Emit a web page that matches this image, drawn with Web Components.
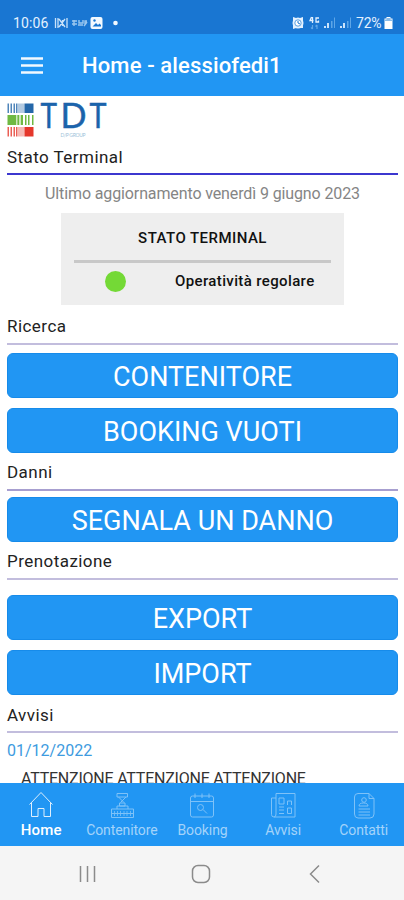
<!DOCTYPE html>
<html lang="it">
<head>
<meta charset="utf-8">
<title>Home</title>
<style>
    html, body {
        margin: 0;
        height: 100%;
        overflow: hidden;
        font-family: Roboto, sans-serif;
        background: #fff;
    }
</style>
</head>
<body>
<terminal-app></terminal-app>

<script>
const icons = {
    home: `<path d="M1.500 13.500 13 1.500 24.500 13.500M3.500 11.500V25.500H10V17.500H16V25.500H22.500V11.500"/>`,
    container: `<path d="M8 2.500H18.500V6H8ZM9.500 6 15 11.500M17 6 11.500 11.500M10.500 12H16V15H10.500ZM8 15H19V18M8 15V18M2.500 18H24.500V26.500H2.500ZM2.500 22.500H24.500"/><path d="M5.500 20V25M8.500 20V25M11.500 20V25M15 20V25M18 20V25M21.500 20V25" opacity=".8"/>`,
    booking: `<path d="M3.500 5H22.500Q24.500 5 24.500 7V24Q24.500 26 22.500 26H3.500Q1.500 26 1.500 24V7Q1.500 5 3.500 5ZM1.500 10.500H24.500M6 2.500V7M13 2.500V7M20 2.500V7M14 18.500 18 22.500"/><circle cx="11.500" cy="16.500" r="3"/>`,
    news: `<path d="M6 2.500H25V26H4Q1.500 26 1.500 23.500V7H6M6 2.500V23Q6 26 4 26M9 7H14V13H9ZM17.500 10V14M21.500 10V14M17.500 10H21.500M9 16H14M9 19H14M9 22.500H14M17.500 17H21.500V22.500H17.500Z"/>`,
    contacts: `<path d="M7 2.500H18L23 7.500V23Q23 27 19 27H7Q3.500 27 3.500 23V6Q3.500 2.500 7 2.500ZM18 2.500V7.500H23M8 15Q8 12 12.500 12T17 15ZM7.500 18H19M7.500 21H19M7.500 24H19"/><circle cx="13" cy="9" r="2.300"/>`
};

class StatusBar extends HTMLElement {
    constructor() {
        super();

        this.shadow = this.attachShadow({ mode: "open" });
        this.shadow.innerHTML = `
            <style>
                :host {
                    display: flex;
                    align-items: center;
                    box-sizing: border-box;
                    height: 34px;
                    padding: 12px 11px 0 13px;
                    background: #1976d2;
                    color: #e3f1ff;
                    font-size: 14px;
                    line-height: 20px;
                }

                svg {
                    display: block;
                    flex: none;
                }

                .clock {
                    width: 41px;
                    letter-spacing: 0.15px;
                }

                .battery {
                    width: 28px;
                    letter-spacing: -0.2px;
                }
            </style>
            <span class="clock">10:06</span>
            <svg width="68" height="16" viewBox="0 0 68 16" fill="none" stroke="#c8e2fa">
                <path d="M1.500 3V13M4 3V13M13 3V13M5 4 11 12M11 4 5 12M8.500 5V11" stroke-width="1.300"/>
                <path d="M18 6H23M18 9H23M20 5V11M25 5V8H29V5M24 10H29M31 10V6H33M30 11 33 7" stroke="#9bc7ef" stroke-width="1.400"/>
                <rect x="36.500" y="2" width="12" height="12" rx="2" fill="#f2f9ff" stroke="none"/>
                <path d="M38.500 11.500 42 8 44 10 45.500 8.500 47 10V11.500Z" fill="#1976d2" stroke="none"/>
                <circle cx="40.500" cy="5.500" r="1.200" fill="#1976d2" stroke="none"/>
                <circle cx="61.500" cy="8" r="2.300" fill="#f2f9ff" stroke="none"/>
            </svg>
            <svg width="64" height="16" viewBox="0 0 64 16" style="margin-left:auto">
                <path d="M1 2 4 3H8L11 2V13L8 13H4L1 14Z" fill="#e3f1ff"/>
                <circle cx="6" cy="8" r="5.500" fill="#e3f1ff"/>
                <circle cx="6" cy="8" r="3.200" fill="#fff" stroke="#5ba0e1"/>
                <path d="M6 6V8L8 9" fill="none" stroke="#1976d2"/>
                <path d="M19.500 2 18 5.500H21.500M20.500 2V8M27 3H24V7H26.500V5.500" fill="none" stroke="#e3f1ff" stroke-width="1.300"/>
                <path d="M20.500 10V14M19 12.500 20.500 14M25 14V10M23.500 11.500 25 10" fill="none" stroke="#5ea6e7" stroke-width="1.200"/>
                <path d="M32 13V11H34V13ZM35 13V8H37V13Z" fill="#cae3fb"/>
                <path d="M39 13V6H40.500V13ZM42 13V2.500H43V13Z" fill="#5ea6e7"/>
                <path d="M48 13V11H50V13ZM51 13V8H53V13Z" fill="#cae3fb"/>
                <path d="M55 13V6H56.500V13ZM58 13V2.500H59V13Z" fill="#5ea6e7"/>
            </svg>
            <span class="battery">72%</span>
            <svg width="9" height="16" viewBox="0 0 9 16">
                <path d="M2.500 2H6.500V3.500H8.500V14H0.500V3.500H2.500Z" fill="#fff"/>
                <path d="M2.500 3H6.500V4.500H8.500V6H0.500V4.500H2.500Z" fill="#8bbce9"/>
            </svg>
        `;
    }
}

class AppHeader extends HTMLElement {
    constructor() {
        super();

        this.shadow = this.attachShadow({ mode: "open" });
        this.shadow.innerHTML = `
            <style>
                :host {
                    display: flex;
                    align-items: center;
                    box-sizing: border-box;
                    height: 62px;
                    padding: 1px 21px 0;
                    gap: 39px;
                    background: #2196f3;
                    color: #fff;
                    font-size: 22px;
                    font-weight: 500;
                    letter-spacing: 0.13px;
                }

                svg {
                    display: block;
                }
            </style>
            <svg width="22" height="18" viewBox="0 0 22 18" stroke="#f2f9ff" stroke-width="2.300">
                <path d="M0 1.500H22M0 8.500H22M0 15.500H22"/>
            </svg>
            <slot></slot>
        `;
    }
}

class BrandLogo extends HTMLElement {
    constructor() {
        super();

        this.shadow = this.attachShadow({ mode: "open" });
        this.shadow.innerHTML = `
            <style>
                :host {
                    display: block;
                    height: 51px;
                }

                svg {
                    display: block;
                }

                text {
                    font-family: Lato, sans-serif;
                }
            </style>
            <svg width="110" height="51" viewBox="0 0 110 51">
                <g fill="#2467a9">
                    <path d="M0.500 7.500H2V17H0.500ZM3.500 7.500H5V17H3.500ZM6.500 7.500H8V17H6.500ZM9 7.500H10.500V17H9Z" opacity=".8"/>
                    <path d="M11 7.500H17.500V17H11Z" opacity=".35"/>
                    <path d="M17.500 7.500H26.500V17H17.500Z"/>
                </g>
                <path d="M0.500 19H9V29H0.500ZM10.500 19H12V29H10.500ZM14 19H16V29H14ZM18 19H19.500V29H18ZM21 19H22.500V29H21ZM25 19H26.500V29H25Z" fill="#6fb943"/>
                <path d="M8 19H16V29H8Z" fill="#6fb943" opacity=".35"/>
                <g fill="#e5372b">
                    <path d="M0.500 31H2V40.500H0.500ZM3.500 31H5V40.500H3.500ZM6.500 31H8V40.500H6.500ZM9 31H10.500V40.500H9Z" opacity=".8"/>
                    <path d="M11 31H17.500V40.500H11Z" opacity=".35"/>
                    <path d="M17.500 31H26.500V40.500H17.500Z"/>
                </g>
                <g fill="#1b63ab" stroke="#1b63ab" stroke-width=".5" font-size="34.500">
                    <text x="33.500" y="32.300" textLength="16.500" lengthAdjust="spacingAndGlyphs">T</text>
                    <text x="53.500" y="32.300" textLength="26" lengthAdjust="spacingAndGlyphs">D</text>
                    <text x="82.500" y="32.300" textLength="17" lengthAdjust="spacingAndGlyphs">T</text>
                </g>
                <text x="53.500" y="41" font-size="5" fill="#9dbfd9" textLength="25">D/P GROUP</text>
            </svg>
        `;
    }
}

class PageSection extends HTMLElement {
    constructor() {
        super();

        this.shadow = this.attachShadow({ mode: "open" });
        this.shadow.innerHTML = `
            <style>
                :host {
                    display: block;
                    margin-bottom: 10px;
                }

                h2 {
                    margin: 0;
                    padding-bottom: var(--title-drop, 8px);
                    border-bottom: 2px solid var(--rule-color, #c2bddd);
                    color: #222;
                    font-size: 17px;
                    font-weight: 400;
                    line-height: calc(26px - var(--title-drop, 8px));
                    letter-spacing: 0.45px;
                }

                .body {
                    display: flex;
                    flex-direction: column;
                    gap: 10px;
                    padding-top: var(--body-gap, 8px);
                }
            </style>
            <h2></h2>
            <div class="body"><slot></slot></div>
        `;
    }

    connectedCallback() {
        this.shadow.querySelector("h2").textContent = this.getAttribute("heading");
    }
}

class ActionButton extends HTMLElement {
    constructor() {
        super();

        this.shadow = this.attachShadow({ mode: "open" });
        this.shadow.innerHTML = `
            <style>
                :host {
                    display: block;
                }

                button {
                    display: block;
                    width: 100%;
                    height: 45px;
                    padding: 3px 0 0;
                    border: 1px solid #168bea;
                    border-radius: 6px;
                    background: #2196f3;
                    color: #fff;
                    font: 400 27px/40px Roboto, sans-serif;
                    cursor: pointer;
                }
            </style>
            <button><slot></slot></button>
        `;
    }
}

class StatusCard extends HTMLElement {
    constructor() {
        super();

        this.shadow = this.attachShadow({ mode: "open" });
        this.shadow.innerHTML = `
            <style>
                :host {
                    display: block;
                    box-sizing: border-box;
                    width: 283px;
                    height: 92px;
                    margin: -1px 0 0 54px;
                    padding: 15px 13px 0;
                    background: #eee;
                    color: #111;
                    font-size: 15px;
                    font-weight: 500;
                    line-height: 20px;
                }

                .title {
                    padding-bottom: 12px;
                    border-bottom: 3px solid #c8c8c8;
                    text-align: center;
                    letter-spacing: 0.45px;
                }

                .row {
                    display: flex;
                    align-items: center;
                    height: 36px;
                    gap: 49px;
                    padding-left: 31px;
                    letter-spacing: 0.37px;
                    white-space: nowrap;
                }

                .dot {
                    width: 21px;
                    height: 21px;
                    border-radius: 50%;
                    background: #74d936;
                }
            </style>
            <div class="title"><slot name="title"></slot></div>
            <div class="row"><span class="dot"></span><slot></slot></div>
        `;
    }
}

class TabItem extends HTMLElement {
    constructor() {
        super();

        this.shadow = this.attachShadow({ mode: "open" });
        this.shadow.innerHTML = `
            <style>
                :host {
                    display: flex;
                    flex-direction: column;
                    align-items: center;
                    padding-top: 8px;
                    color: #a3d3fa;
                    font-size: 14px;
                    line-height: 18px;
                    letter-spacing: -0.1px;
                }

                :host([active]) {
                    color: #fff;
                    font-size: 15px;
                    font-weight: 500;
                    letter-spacing: 0.2px;
                }

                svg {
                    display: block;
                    margin-bottom: 2px;
                    opacity: 0.72;
                }

                :host([active]) svg {
                    opacity: 0.85;
                }
            </style>
            <svg width="26" height="28" viewBox="0 0 26 28" fill="none" stroke="currentColor"></svg>
            <slot></slot>
        `;
    }

    connectedCallback() {
        this.shadow.querySelector("svg").innerHTML = icons[this.getAttribute("icon")];
    }
}

class TabBar extends HTMLElement {
    constructor() {
        super();

        this.shadow = this.attachShadow({ mode: "open" });
        this.shadow.innerHTML = `
            <style>
                :host {
                    display: grid;
                    grid-template-columns: repeat(5, 1fr);
                    height: 63px;
                    padding-left: 1px;
                    background: #2196f3;
                }
            </style>
            <slot></slot>
        `;
    }
}

class SystemNav extends HTMLElement {
    constructor() {
        super();

        this.shadow = this.attachShadow({ mode: "open" });
        this.shadow.innerHTML = `
            <style>
                :host {
                    display: grid;
                    grid-template-columns: 113px 117px 14px;
                    align-items: center;
                    box-sizing: border-box;
                    height: 54px;
                    padding: 2px 0 0 78px;
                    background: #f5f5f5;
                }
            </style>
            <svg width="20" height="20" viewBox="0 0 20 20" fill="none" stroke="#8b8b8b" stroke-width="1.500">
                <path d="M2.500 2V18M9.500 2V18M16.500 2V18"/>
            </svg>
            <svg width="20" height="20" viewBox="0 0 20 20" fill="none" stroke="#8b8b8b" stroke-width="1.500">
                <rect x="1.500" y="1.500" width="17" height="17" rx="5.500"/>
            </svg>
            <svg width="14" height="20" viewBox="0 0 14 20" fill="none" stroke="#8b8b8b" stroke-width="1.500">
                <path d="M11 1.500 2.500 10 11 18.500"/>
            </svg>
        `;
    }
}

class TerminalApp extends HTMLElement {
    constructor() {
        super();

        this.shadow = this.attachShadow({ mode: "open" });
        this.shadow.innerHTML = `
            <style>
                :host {
                    display: flex;
                    flex-direction: column;
                    height: 900px;
                }

                main {
                    flex: 1;
                    min-height: 0;
                    overflow: hidden;
                    padding: 0 6px 0 7px;
                }

                .first {
                    --rule-color: #3c37cf;
                    --title-drop: 6px;
                    --body-gap: 9px;
                    margin-bottom: 12px;
                }

                .damage {
                    --rule-color: #a79fd0;
                    --body-gap: 6px;
                }

                .reservation {
                    --body-gap: 15px;
                }

                .notices {
                    --title-drop: 6px;
                }

                .updated {
                    color: #858585;
                    font-size: 16px;
                    line-height: 20px;
                    letter-spacing: -0.12px;
                    text-align: center;
                    white-space: nowrap;
                }

                .date {
                    color: #3d9be0;
                    font-size: 16px;
                    line-height: 20px;
                }

                .notice {
                    margin-top: -2px;
                    padding-left: 14px;
                    color: #333;
                    font-size: 16px;
                    line-height: 20px;
                    letter-spacing: -0.22px;
                    white-space: nowrap;
                }
            </style>
            <status-bar></status-bar>
            <app-header>Home - alessiofedi1</app-header>
            <main>
                <brand-logo></brand-logo>
                <page-section class="first" heading="Stato Terminal">
                    <div class="updated">Ultimo aggiornamento venerdì 9 giugno 2023</div>
                    <status-card>
                        <span slot="title">STATO TERMINAL</span>
                        <span>Operatività regolare</span>
                    </status-card>
                </page-section>
                <page-section heading="Ricerca">
                    <action-button>CONTENITORE</action-button>
                    <action-button>BOOKING VUOTI</action-button>
                </page-section>
                <page-section class="damage" heading="Danni">
                    <action-button>SEGNALA UN DANNO</action-button>
                </page-section>
                <page-section class="reservation" heading="Prenotazione">
                    <action-button>EXPORT</action-button>
                    <action-button>IMPORT</action-button>
                </page-section>
                <page-section class="notices" heading="Avvisi">
                    <div class="date">01/12/2022</div>
                    <div class="notice">ATTENZIONE ATTENZIONE ATTENZIONE</div>
                </page-section>
            </main>
            <tab-bar>
                <tab-item icon="home" active>Home</tab-item>
                <tab-item icon="container">Contenitore</tab-item>
                <tab-item icon="booking">Booking</tab-item>
                <tab-item icon="news">Avvisi</tab-item>
                <tab-item icon="contacts">Contatti</tab-item>
            </tab-bar>
            <system-nav></system-nav>
        `;
    }
}

customElements.define("status-bar", StatusBar);
customElements.define("app-header", AppHeader);
customElements.define("brand-logo", BrandLogo);
customElements.define("page-section", PageSection);
customElements.define("action-button", ActionButton);
customElements.define("status-card", StatusCard);
customElements.define("tab-item", TabItem);
customElements.define("tab-bar", TabBar);
customElements.define("system-nav", SystemNav);
customElements.define("terminal-app", TerminalApp);
</script>
</body>
</html>
